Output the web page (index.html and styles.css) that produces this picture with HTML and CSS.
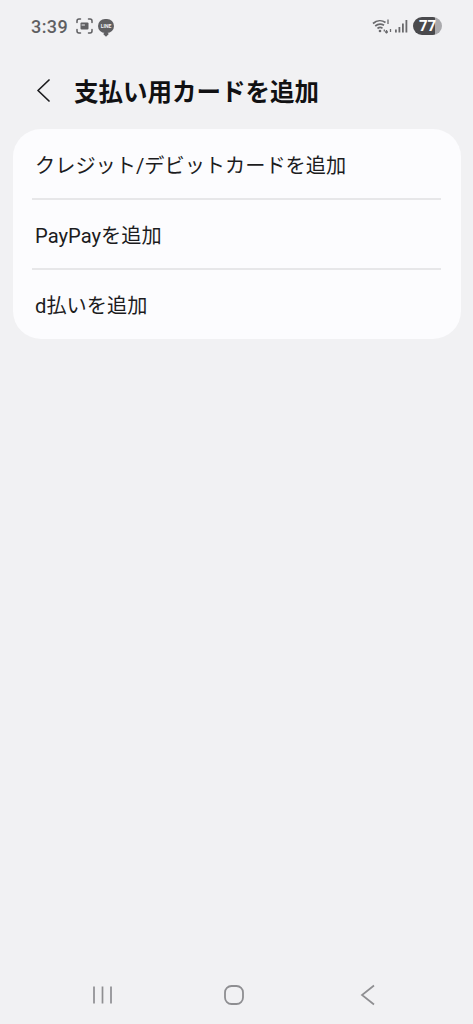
FILE: index.html
```html
<!DOCTYPE html>
<html lang="ja">
<head>
<meta charset="utf-8">
<title>支払い用カードを追加</title>
<link rel="stylesheet" href="styles.css">
</head>
<body>
<div class="screen">
  <header class="status">
    <div class="status-left">
      <span class="time">3:39</span>
      <svg class="ico-shot" width="17" height="16" viewBox="0 0 17 16" fill="none" stroke="#5f5f62" stroke-width="1.5" stroke-linecap="round"><path d="M1 4.500V3a2 2 0 0 1 2-2h1.500M12.500 1H14a2 2 0 0 1 2 2v1.500M16 11.500V13a2 2 0 0 1-2 2h-1.500M4.500 15H3a2 2 0 0 1-2-2v-1.500"/><rect x="4.500" y="4.500" width="8" height="7" rx="1" fill="#5f5f62" stroke="none"/><path d="M6 7h2.500" stroke="#f1f1f3" stroke-width="1"/></svg>
      <span class="line-badge"><span class="line-text">LINE</span></span>
    </div>
    <div class="status-right">
      <svg class="ico-wifi" width="20" height="16" viewBox="0 0 20 16" fill="none" stroke="#6a6a6d" stroke-width="1.700"><path d="M1 5.500C5 2 10 2 13.500 4.500M3.200 8C6 5.800 9.500 5.800 12 7.300M5.500 10.500C7 9.300 9 9.300 10.500 10.200"/><circle cx="8" cy="13" r="1.300" fill="#6a6a6d" stroke="none"/><path d="M16 1.500v4.500M14.500 12v3.500M13 14h3M18.500 11v3M12.300 11.500v2" stroke-width="1.300"/></svg>
      <svg class="ico-signal" width="13" height="14" viewBox="0 0 13 14" fill="#6a6a6d"><rect x="0" y="10.500" width="1.800" height="3"/><rect x="3.500" y="8" width="1.800" height="5.500"/><rect x="7" y="4.500" width="1.800" height="9"/><rect x="10.500" y="1" width="1.800" height="12.500"/></svg>
      <span class="battery"><span class="battery-num">77</span></span>
    </div>
  </header>

  <div class="titlebar">
    <svg class="back" width="16" height="24" viewBox="0 0 16 24" fill="none" stroke="#1c1c1e" stroke-width="1.700" stroke-linecap="round" stroke-linejoin="round"><path d="M15 1 4 11.500 15 22"/></svg>
    <h1 class="title">支払い用カードを追加</h1>
  </div>

  <ul class="card">
    <li class="row">クレジット/デビットカードを追加</li>
    <li class="row">PayPayを追加</li>
    <li class="row">d払いを追加</li>
  </ul>

  <nav class="navbar">
    <svg width="22" height="20" viewBox="0 0 22 20" fill="none" stroke="#8e8e91" stroke-width="1.700"><path d="M3 1.500v17M11.500 1.500v17M20 1.500v17"/></svg>
    <svg class="nav-home" width="22" height="22" viewBox="0 0 22 22" fill="none" stroke="#8e8e91" stroke-width="1.800"><rect x="2" y="2" width="18" height="18" rx="6.500"/></svg>
    <svg class="nav-back" width="16" height="22" viewBox="0 0 16 22" fill="none" stroke="#8e8e91" stroke-width="1.700"><path d="M14 1.500 2 11l12 9.500"/></svg>
  </nav>
</div>
</body>
</html>
```
FILE: styles.css
```css
* { box-sizing: border-box; }
html, body { margin: 0; padding: 0; }
body {
  background: #f1f1f3;
  font-family: Roboto, "Noto Sans CJK JP", sans-serif;
  color: #1c1c1e;
}
.screen {
  width: 473px;
  height: 1024px;
  display: flex;
  flex-direction: column;
  overflow: hidden;
}
.status {
  height: 52px;
  flex: none;
  display: flex;
  align-items: center;
  justify-content: space-between;
  padding: 0 31px;
}
.status-left, .status-right { display: flex; align-items: center; }
.time {
  font-size: 18px;
  font-weight: 500;
  color: #5f5f62;
  letter-spacing: 0.4px;
}
.ico-shot { margin-left: 8px; }
.line-badge {
  margin-left: 5px;
  width: 16px;
  height: 14px;
  border-radius: 8px;
  background: #5f5f62;
  display: flex;
  align-items: center;
  justify-content: center;
  position: relative;
}
.line-badge::after {
  content: "";
  position: absolute;
  left: 6px;
  bottom: -3px;
  width: 4px;
  height: 4px;
  background: #5f5f62;
  transform: rotate(45deg);
}
.line-text {
  font-size: 5px;
  font-weight: 700;
  color: #f1f1f3;
  line-height: 1;
}
.ico-signal { margin-left: 3px; }
.battery {
  margin-left: 5px;
  width: 29px;
  height: 18px;
  border-radius: 9px;
  background: linear-gradient(90deg, #4a4a4d 0 75%, #aaaaad 75% 100%);
  display: flex;
  align-items: center;
  justify-content: center;
}
.battery-num {
  font-size: 15px;
  font-weight: 700;
  color: #fff;
  line-height: 1;
}
.titlebar {
  flex: none;
  height: 77px;
  display: flex;
  align-items: center;
  padding-left: 34px;
}
.title {
  margin: 0 0 0 24px;
  font-size: 24.5px;
  font-weight: 700;
  font-family: "Noto Sans CJK JP", sans-serif;
  color: #111113;
  line-height: 1.2;
}
.card {
  list-style: none;
  margin: 0 12px 0 13px;
  padding: 1px 20px 0 19px;
  background: #fcfcfe;
  border-radius: 28px;
  flex: none;
}
.row {
  height: 70px;
  display: flex;
  align-items: center;
  padding-left: 3px;
  font-size: 20.2px;
  color: #1c1c1e;
  border-bottom: 2px solid #e7e7e9;
}
.row:last-child { height: 69px; border-bottom: 0; }
.navbar {
  margin-top: auto;
  height: 58px;
  flex: none;
  display: flex;
  align-items: center;
  padding-left: 91px;
}
.nav-home { margin-left: 110px; }
.nav-back { margin-left: 115px; }
```
